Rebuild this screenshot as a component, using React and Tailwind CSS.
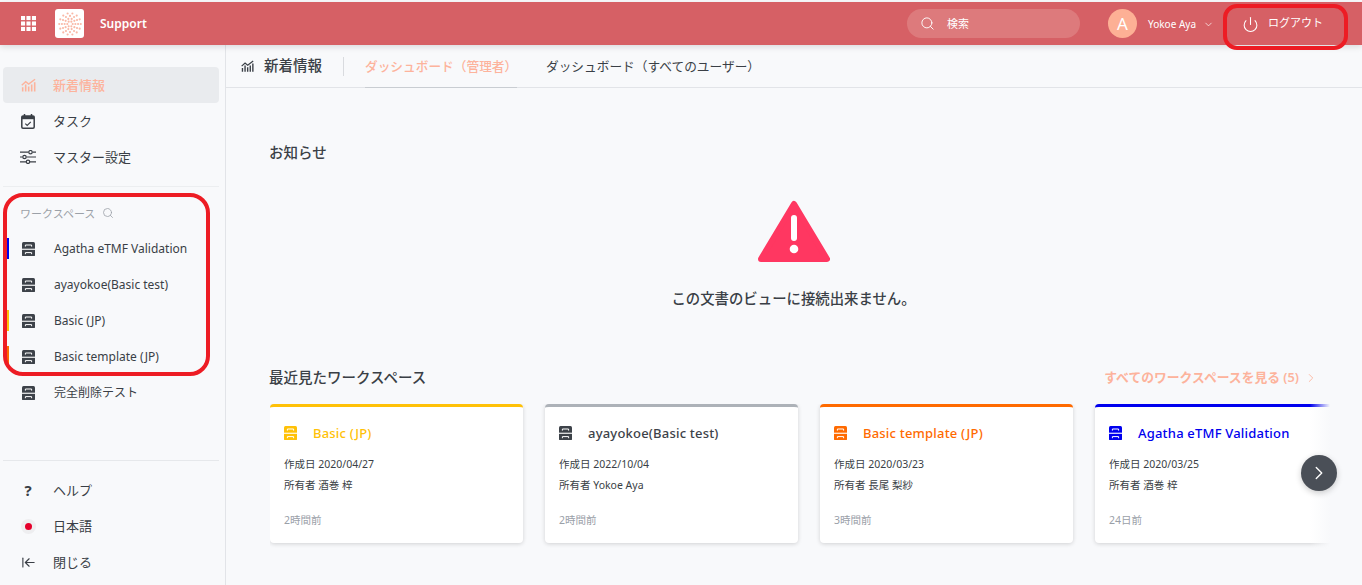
import React from "react";
import { Search, ChevronDown, ChevronRight, Power, ArrowLeftToLine } from "lucide-react";

const FONT = "font-['Noto_Sans','Noto_Sans_CJK_JP',sans-serif]";

function Grid9({ className }) {
  const cells = [];
  for (let y = 0; y < 3; y++) for (let x = 0; x < 3; x++) cells.push(<rect key={`${x}-${y}`} x={x * 5.6} y={y * 5.6} width="4.2" height="4.2" />);
  return <svg viewBox="0 0 15.4 15.4" className={className} fill="currentColor">{cells}</svg>;
}

function Logo() {
  const dots = [];
  for (let r = 1; r <= 4; r++) {
    const n = r === 1 ? 6 : r === 2 ? 10 : r === 3 ? 12 : 14;
    for (let i = 0; i < n; i++) {
      const a = (i / n) * Math.PI * 2;
      dots.push(<circle key={`${r}-${i}`} cx={14 + Math.cos(a) * r * 2.9} cy={14 + Math.sin(a) * r * 2.9} r="1.15" />);
    }
  }
  return <svg viewBox="0 0 28 28" className="w-[26px] h-[26px]" fill="#f9b8a6">{dots}</svg>;
}

function Trend({ className }) {
  return (
    <svg viewBox="0 0 16 14" className={className} fill="none" stroke="currentColor" strokeWidth="1.5">
      <path d="M0.8 7.2 5 3.4 8.2 6 15 0.8" />
      <path d="M1.8 14V9.5M5 14V6.5M8.2 14V8.5M11.4 14V6.5M14.6 14V4" strokeWidth="1.7" />
    </svg>
  );
}

function Calendar() {
  return (
    <svg viewBox="0 0 14 15" className="w-[14px] h-[15px]" fill="none">
      <rect x="0.8" y="2" width="12.4" height="12.2" rx="1.2" stroke="currentColor" strokeWidth="1.5" />
      <rect x="0.8" y="2" width="12.4" height="3.2" fill="currentColor" />
      <path d="M3.5 0v3M10.5 0v3" stroke="currentColor" strokeWidth="1.5" />
      <path d="M4.3 9.6 6.2 11.4 9.8 7.8" stroke="currentColor" strokeWidth="1.2" />
    </svg>
  );
}

function Sliders() {
  return (
    <svg viewBox="0 0 16 14" className="w-[16px] h-[14px]" fill="none" stroke="currentColor" strokeWidth="1.2">
      <path d="M0 2.2h8.5M12.5 2.2H16M0 7h2.5M6.5 7H16M0 11.8h6M10 11.8h6" />
      <circle cx="10.5" cy="2.2" r="1.7" />
      <circle cx="4.5" cy="7" r="1.7" />
      <circle cx="8" cy="11.8" r="1.7" />
    </svg>
  );
}

function Cabinet({ color = "#3d4249" }) {
  return (
    <svg viewBox="0 0 13 14.5" className="w-[13px] h-[14.5px] shrink-0">
      <rect width="13" height="14.5" rx="1.5" fill={color} />
      <rect y="6.7" width="13" height="1.1" fill="#fff" />
      <path d="M3.4 4.6V3h6.2v1.6M3.4 12.2v-1.6h6.2v1.6" fill="none" stroke="#fff" strokeWidth="1" />
    </svg>
  );
}

function NavItem({ icon, label, active }) {
  return (
    <div className={`flex items-center h-9 mx-[3px] w-[216px] rounded ${active ? "bg-[#e9ebee] text-[#fdb39c] font-medium" : "text-[#3a3f46]"}`}>
      <span className="w-[50px] flex justify-center shrink-0">{icon}</span>
      <span className="text-[13px] leading-none">{label}</span>
    </div>
  );
}

function WorkspaceItem({ label, bar }) {
  return (
    <div className="relative flex items-center h-9 mx-[3px] w-[216px] text-[#3a3f46]">
      {bar && <span className="absolute left-[4px] top-[7px] h-[21px] w-[2px]" style={{ background: bar }} />}
      <span className="w-[51px] flex justify-center pr-[1px] shrink-0"><Cabinet /></span>
      <span className="text-[12px] leading-none">{label}</span>
    </div>
  );
}

function Card({ title, color, titleColor, date, owner, ago }) {
  return (
    <div className="h-[139px] w-[253px] shrink-0 bg-white rounded-[4px] border-t-[3px] shadow-[0_1px_4px_rgba(0,0,0,0.16)] pl-[14px]" style={{ borderTopColor: color }}>
      <div className="flex items-center gap-[16px] mt-[15px] h-[22px]">
        <Cabinet color={titleColor} />
        <span className="text-[13px] font-medium leading-none tracking-[0.2px]" style={{ color: titleColor }}>{title}</span>
      </div>
      <div className="mt-[10px] text-[10.5px] leading-[20.5px] text-[#3a3f46]">
        <div>作成日 {date}</div>
        <div>所有者 {owner}</div>
      </div>
      <div className="mt-[18px] text-[10.5px] leading-[14px] text-[#9aa0a8]">{ago}</div>
    </div>
  );
}

export default function App() {
  return (
    <div className={`relative w-[1362px] h-[585px] overflow-hidden bg-[#f8f9fb] flex flex-col ${FONT}`}>
      <header className="relative z-10 mt-[2px] h-[43px] bg-[#d66065] text-white flex items-center shadow-[0_2px_6px_rgba(0,0,0,0.12)] shrink-0">
        <div className="ml-[21px] w-[34px]"><Grid9 className="w-[15px] h-[15px]" /></div>
        <div className="w-[29px] h-[29px] rounded-[3px] bg-white flex items-center justify-center"><Logo /></div>
        <span className="ml-[16px] mt-[1px] text-[12px] font-semibold">Support</span>
        <div className="ml-auto w-[173px] h-[29px] rounded-full bg-[#dd7a7c] flex items-center pl-[13px] gap-[12px]">
          <Search className="w-[15px] h-[15px]" strokeWidth={1.5} />
          <span className="text-[11px] mt-[2px]">検索</span>
        </div>
        <div className="ml-[28px] w-[29px] h-[29px] rounded-full bg-[#fdb095] flex items-center justify-center text-[17px]">A</div>
        <span className="ml-[11px] mt-[1px] text-[10px]">Yokoe Aya</span>
        <ChevronDown className="ml-[7px] mt-[1px] w-[11px] h-[11px]" strokeWidth={1.5} />
        <div className="ml-[28px] w-[120px] flex items-center">
          <Power className="w-[17px] h-[17px] mt-[2px]" strokeWidth={1.5} />
          <span className="ml-[9px] text-[11px] -mt-[1px]">ログアウト</span>
        </div>
      </header>

      <div className="flex flex-1 min-h-0">
        <aside className="w-[226px] shrink-0 border-r border-[#e2e4e8] flex flex-col pt-[22px]">
          <NavItem active label="新着情報" icon={<Trend className="w-[15px] h-[14px]" />} />
          <NavItem label="タスク" icon={<Calendar />} />
          <NavItem label="マスター設定" icon={<Sliders />} />
          <div className="mx-[3px] w-[216px] h-px bg-[#eceef0] mt-[11px]" />
          <div className="flex items-center h-[14px] mt-[19px] pl-[20px] gap-[7px] text-[#9ca1a8]">
            <span className="text-[11px] leading-none">ワークスペース</span>
            <Search className="w-[12px] h-[12px]" strokeWidth={1.6} />
          </div>
          <div className="mt-[11px]">
            <WorkspaceItem label="Agatha eTMF Validation" bar="#0000ee" />
            <WorkspaceItem label="ayayokoe(Basic test)" />
            <WorkspaceItem label="Basic (JP)" bar="#ffc107" />
            <WorkspaceItem label="Basic template (JP)" bar="#ff6a00" />
            <WorkspaceItem label="完全削除テスト" />
          </div>
          <div className="mx-[3px] w-[216px] h-px bg-[#e6e8eb] mt-[49px] mb-[11px]" />
          <NavItem label="ヘルプ" icon={<span className="text-[15px] font-bold leading-none">?</span>} />
          <NavItem label="日本語" icon={
            <span className="w-[15px] h-[15px] rounded-full bg-[#eeeef0] flex items-center justify-center"><span className="w-[7px] h-[7px] rounded-full bg-[#e5002b]" /></span>
          } />
          <NavItem label="閉じる" icon={<ArrowLeftToLine className="w-[15px] h-[15px]" strokeWidth={1.8} />} />
        </aside>

        <main className="flex-1 min-w-0 flex flex-col">
          <div className="h-[43px] border-b border-[#e2e4e8] flex items-stretch shrink-0 pl-[15px]">
            <div className="flex items-center text-[#3a3f46]">
              <Trend className="w-[13px] h-[12px]" />
              <span className="ml-[10px] text-[14.5px] font-medium">新着情報</span>
            </div>
            <div className="ml-[21px] w-px h-[19px] self-center bg-[#d9dbdf]" />
            <div className="ml-[21px] w-[152px] pt-[2px] flex items-center border-b border-[#c9cdd2] -mb-px text-[12.7px] font-medium text-[#fdb39c]">ダッシュボード（管理者）</div>
            <div className="ml-[29px] pt-[2px] flex items-center text-[12.7px] text-[#3a3f46]">ダッシュボード（すべてのユーザー）</div>
          </div>

          <div className="pl-[44px] flex flex-col flex-1 min-h-0">
            <h2 className="mt-[54px] -ml-[1px] text-[14.5px] leading-[20px] font-medium text-[#3a3f46]">お知らせ</h2>
            <div className="flex flex-col items-center pr-[44px]">
              <svg viewBox="0 0 72 63" className="mt-[38px] w-[72px] h-[63px]">
                <path d="M36 4 L69 59 H3 Z" fill="#ff3761" stroke="#ff3761" strokeWidth="6" strokeLinejoin="round" />
                <rect x="33" y="15" width="6" height="26" rx="3" fill="#fff" />
                <circle cx="36" cy="49" r="4.3" fill="#fff" />
              </svg>
              <p className="mt-[26px] pr-[1px] text-[14.4px] leading-[20px] font-medium text-[#3a3f46]">この文書のビューに接続出来ません。</p>
            </div>
            <div className="mt-[58px] flex items-center justify-between h-[22px] pr-[44px]">
              <h2 className="-ml-[1px] text-[14.5px] font-medium text-[#3a3f46]">最近見たワークスペース</h2>
              <div className="flex items-center text-[12.8px] font-semibold text-[#fdb39c]">
                <span>すべてのワークスペースを見る (5)</span>
                <ChevronRight className="ml-[5px] w-[14px] h-[14px]" strokeWidth={1.5} />
              </div>
            </div>
            <div className="relative mt-[15px] w-[1060px] h-[145px] overflow-hidden">
              <div className="flex gap-[22px] pb-[5px]">
                <Card title="Basic (JP)" color="#ffc107" titleColor="#ffc107" date="2020/04/27" owner="酒巻 梓" ago="2時間前" />
                <Card title="ayayokoe(Basic test)" color="#adb2b8" titleColor="#3d4249" date="2022/10/04" owner="Yokoe Aya" ago="2時間前" />
                <Card title="Basic template (JP)" color="#ff6a00" titleColor="#ff6a00" date="2020/03/23" owner="長尾 梨紗" ago="3時間前" />
                <Card title="Agatha eTMF Validation" color="#0000ee" titleColor="#0000ee" date="2020/03/25" owner="酒巻 梓" ago="24日前" />
              </div>
              <div className="absolute right-0 top-0 h-full w-[20px] bg-gradient-to-r from-transparent to-[#f8f9fb]" />
            </div>
          </div>
        </main>
      </div>

      <div className="absolute left-[1301px] top-[455px] w-[36px] h-[36px] rounded-full bg-[#4a4f57] text-white flex items-center justify-center shadow-[0_2px_6px_rgba(0,0,0,0.2)]">
        <ChevronRight className="w-[22px] h-[22px]" strokeWidth={1.5} />
      </div>

      <div className="absolute z-20 left-[3px] top-[193px] w-[207px] h-[183px] rounded-[20px] border-[4px] border-[#ed1c24]" />
      <div className="absolute z-20 left-[1223px] top-[4px] w-[125px] h-[46px] rounded-[14px] border-[4px] border-[#ed1c24]" />
    </div>
  );
}
